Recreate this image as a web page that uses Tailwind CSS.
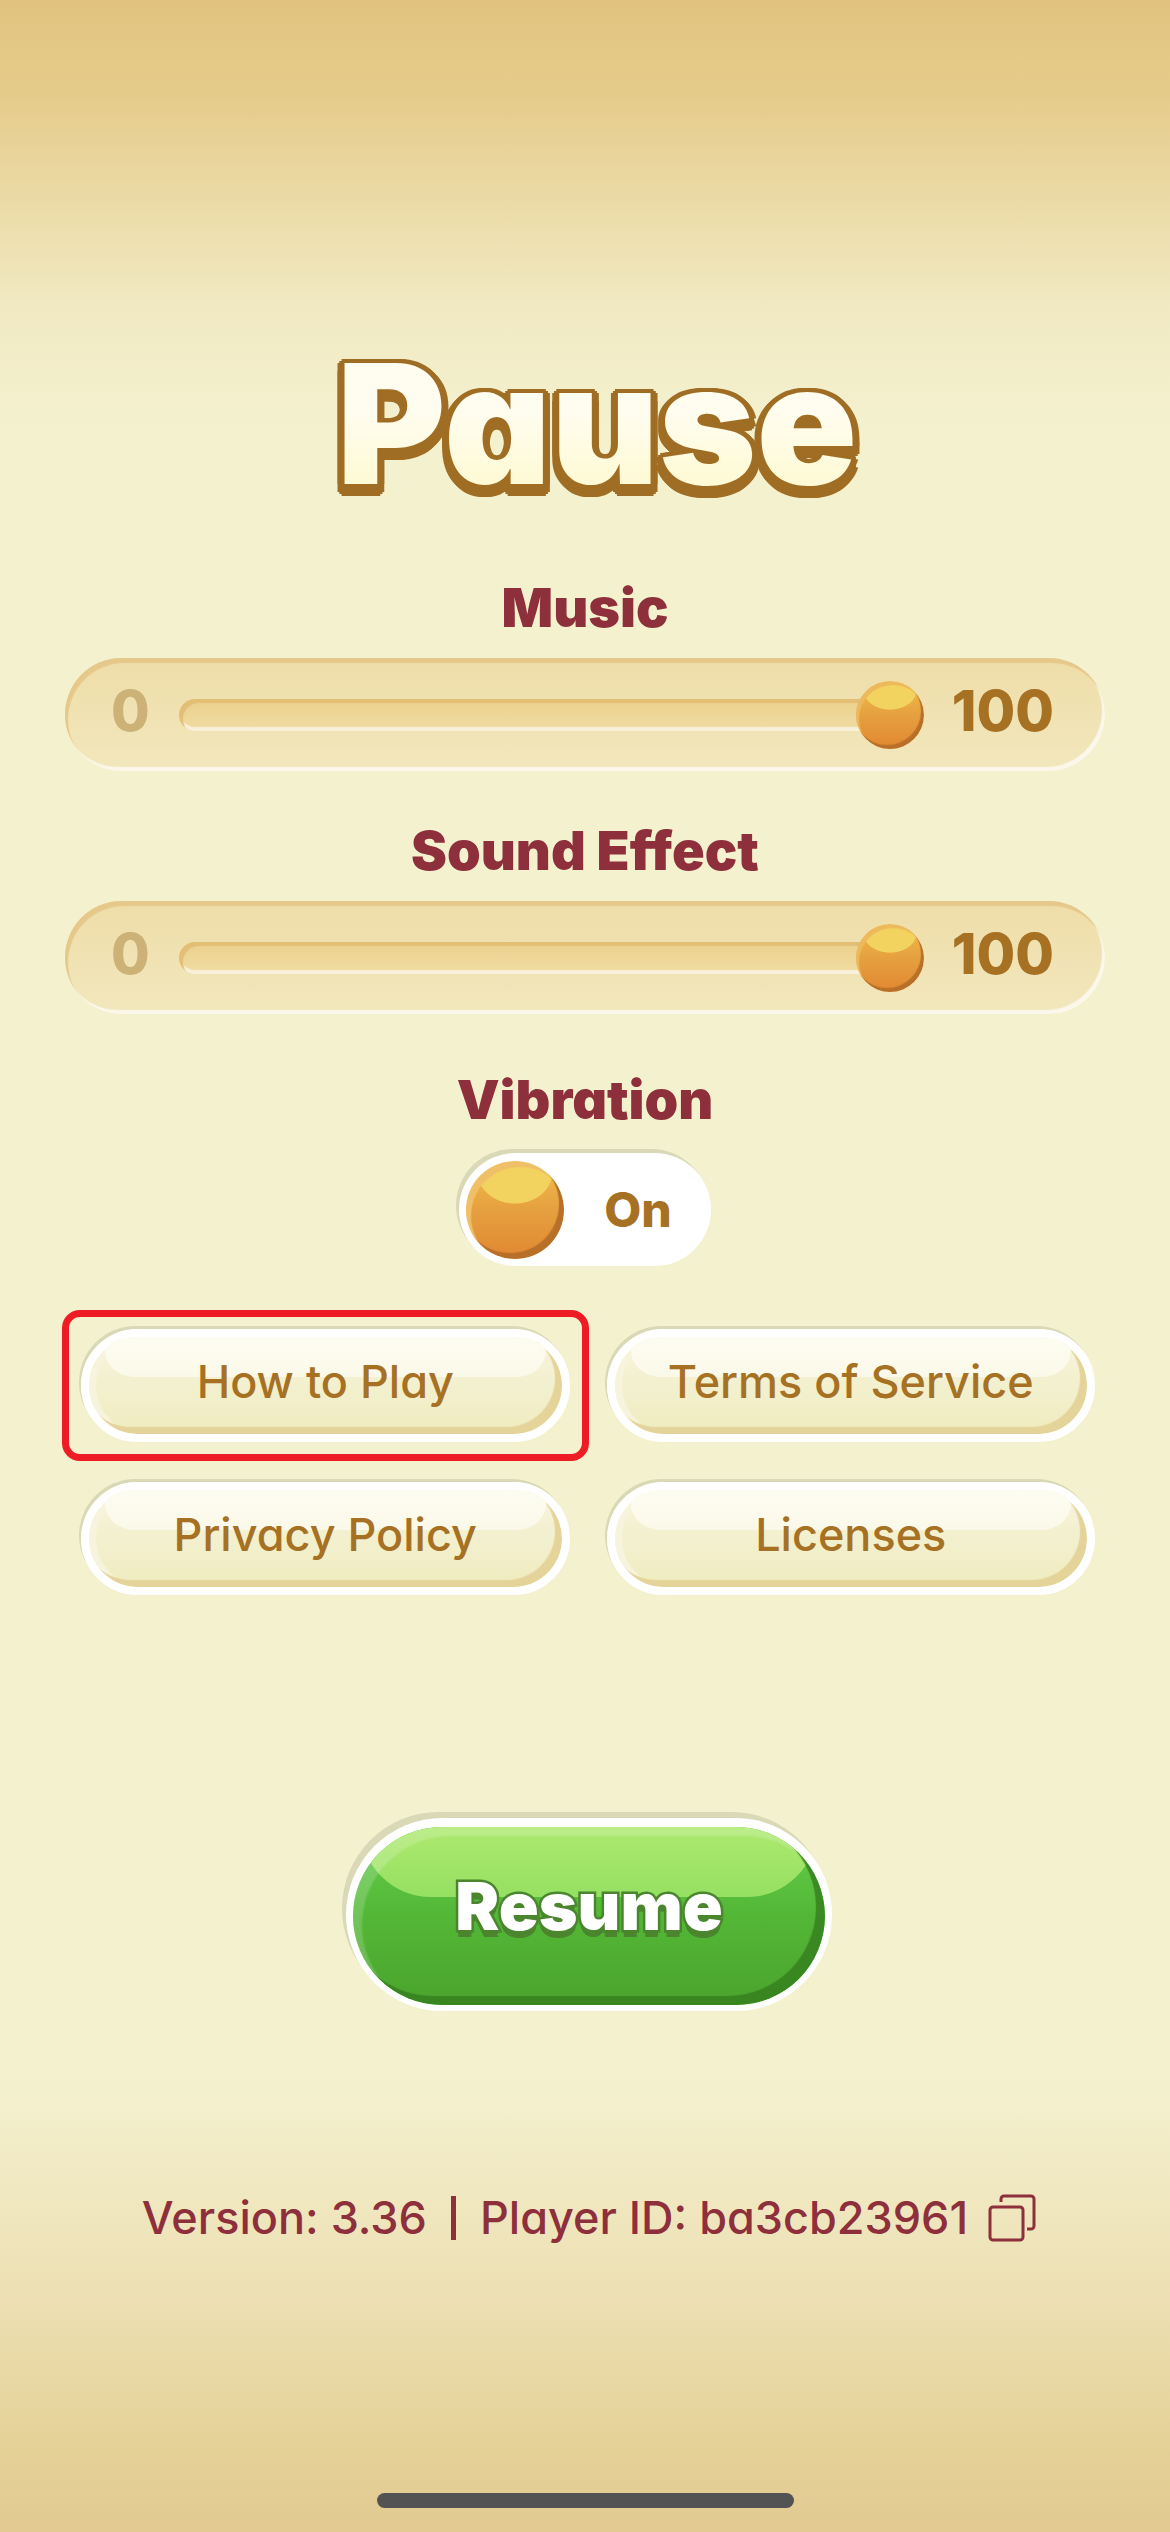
<!DOCTYPE html>
<html lang="en">

<head>
    <meta charset="UTF-8">
    <meta name="viewport" content="width=device-width, initial-scale=1.0">
    <title>Pause</title>
    <!-- Tailwind CSS -->
    <script src="https://cdn.jsdelivr.net/npm/@tailwindcss/browser@4"></script>
</head>

<body class="font-['Inter','Liberation_Sans',sans-serif] [font-feature-settings:'cv11'] text-[#8e2f3c]">
    <main
        class="min-h-screen w-full flex flex-col items-center pt-[344px] pb-6 bg-[linear-gradient(to_bottom,#e1c37e_0px,#e6cc8c_100px,#f1eac3_310px,#f4f1cf_430px,#f4f1cf_calc(100%-452px),#ede0b4_calc(100%-240px),#e4d196_calc(100%-80px),#e2ca92_100%)]">
        <h1 class="pl-6 text-[166px] leading-[160px] font-black">
            <span
                class="block bg-linear-to-b from-[#fffdf0] from-40% to-[#fefad6] to-85% bg-clip-text text-transparent [filter:drop-shadow(2px_2px_0_#9f6d23)_drop-shadow(-2px_-2px_0_#9f6d23)_drop-shadow(2px_-2px_0_#9f6d23)_drop-shadow(-2px_2px_0_#9f6d23)_drop-shadow(3px_0_0_#9f6d23)_drop-shadow(-3px_0_0_#9f6d23)_drop-shadow(0_8px_0_#9f6d23)]">Pause</span>
        </h1>

        <!-- Volume sliders -->
        <section class="w-full px-[65px] mt-[78px] flex flex-col items-center">
            <label for="music" class="text-[54px] leading-[52px] font-black">Music</label>
            <div
                class="mt-6 w-full h-[113px] rounded-full flex items-center pl-[46px] pr-[51px] bg-linear-to-b from-[#eedda8] to-[#f2e7bd] shadow-[inset_3px_5px_1px_#e6c88a,inset_-3px_-4px_1px_#fbf7ea]">
                <span class="w-[68px] pb-2 text-[56px] leading-[56px] font-extrabold text-[#cdb278]">0</span>
                <input id="music" type="range" min="0" max="100" value="100"
                    class="appearance-none min-w-0 flex-1 h-8 rounded-full bg-linear-to-b from-[#ecd08d] to-[#f0dca3] shadow-[inset_4px_4px_1px_#e3bf76,inset_0_-4px_1px_#f8f0da] [&::-webkit-slider-thumb]:appearance-none [&::-webkit-slider-thumb]:size-[68px] [&::-webkit-slider-thumb]:rounded-full [&::-webkit-slider-thumb]:bg-[radial-gradient(27px_20px_at_50%_9px,#f3d35f_96%,transparent),linear-gradient(#efc04e,#e6a03f_50%,#e18732)] [&::-webkit-slider-thumb]:shadow-[inset_-3px_-4px_1px_#b87029,inset_3px_4px_1px_#ecb95c]">
                <span class="pl-7 pb-2 text-[56px] leading-[56px] font-extrabold text-[#a77124]">100</span>
            </div>

            <label for="sound" class="mt-[54px] text-[54px] leading-[52px] font-black">Sound Effect</label>
            <div
                class="mt-6 w-full h-[113px] rounded-full flex items-center pl-[46px] pr-[51px] bg-linear-to-b from-[#eedda8] to-[#f2e7bd] shadow-[inset_3px_5px_1px_#e6c88a,inset_-3px_-4px_1px_#fbf7ea]">
                <span class="w-[68px] pb-2 text-[56px] leading-[56px] font-extrabold text-[#cdb278]">0</span>
                <input id="sound" type="range" min="0" max="100" value="100"
                    class="appearance-none min-w-0 flex-1 h-8 rounded-full bg-linear-to-b from-[#ecd08d] to-[#f0dca3] shadow-[inset_4px_4px_1px_#e3bf76,inset_0_-4px_1px_#f8f0da] [&::-webkit-slider-thumb]:appearance-none [&::-webkit-slider-thumb]:size-[68px] [&::-webkit-slider-thumb]:rounded-full [&::-webkit-slider-thumb]:bg-[radial-gradient(27px_20px_at_50%_9px,#f3d35f_96%,transparent),linear-gradient(#efc04e,#e6a03f_50%,#e18732)] [&::-webkit-slider-thumb]:shadow-[inset_-3px_-4px_1px_#b87029,inset_3px_4px_1px_#ecb95c]">
                <span class="pl-7 pb-2 text-[56px] leading-[56px] font-extrabold text-[#a77124]">100</span>
            </div>
        </section>

        <!-- Vibration toggle -->
        <section class="mt-[60px] flex flex-col items-center">
            <label for="vibration" class="text-[54px] leading-[52px] font-black">Vibration</label>
            <div
                class="mt-[27px] w-[252px] h-[113px] rounded-full bg-white flex items-center px-[7px] shadow-[-3px_-4px_0_#d9d8b7]">
                <input id="vibration" type="checkbox" role="switch" checked
                    class="appearance-none size-[98px] shrink-0 rounded-full bg-[radial-gradient(38px_32px_at_50%_11px,#f3d35f_97%,transparent),linear-gradient(#efc04e,#e6a03f_50%,#e18732)] shadow-[inset_-5px_-6px_1px_#b87029,inset_5px_6px_1px_#efc068]">
                <span class="flex-1 pl-2 text-center text-[48px] leading-[48px] font-extrabold text-[#a77124]">On</span>
            </div>
        </section>

        <!-- Links -->
        <section
            class="mt-[63px] w-full pl-[81px] pr-[75px] grid grid-cols-2 gap-x-[37px] gap-y-10 text-[45px] leading-[48px] font-medium text-[#a77124]">
            <div class="-m-[19px] p-3 border-[7px] border-[#ee1c24] rounded-[18px]">
                <button type="button"
                    class="relative w-full h-[113px] pb-2 rounded-full border-8 border-white bg-linear-to-b from-[#f7f4de] to-[#efecbf] bg-clip-padding shadow-[-2px_-3px_0_#d9d8b7,inset_-7px_-7px_1px_#e5d49a,inset_7px_0_1px_#f7f4dd]">
                    <span class="absolute inset-x-4 top-0 h-10 rounded-t-[32px_14px] rounded-b-[30px_26px] bg-linear-to-b from-[#fdfcf1] to-[#faf9e9]"></span>
                    <span class="relative">How to Play</span>
                </button>
            </div>
            <button type="button"
                class="relative w-full h-[113px] pb-2 rounded-full border-8 border-white bg-linear-to-b from-[#f7f4de] to-[#efecbf] bg-clip-padding shadow-[-2px_-3px_0_#d9d8b7,inset_-7px_-7px_1px_#e5d49a,inset_7px_0_1px_#f7f4dd]">
                <span class="absolute inset-x-4 top-0 h-10 rounded-t-[32px_14px] rounded-b-[30px_26px] bg-linear-to-b from-[#fdfcf1] to-[#faf9e9]"></span>
                <span class="relative">Terms of Service</span>
            </button>
            <button type="button"
                class="relative w-full h-[113px] pb-2 rounded-full border-8 border-white bg-linear-to-b from-[#f7f4de] to-[#efecbf] bg-clip-padding shadow-[-2px_-3px_0_#d9d8b7,inset_-7px_-7px_1px_#e5d49a,inset_7px_0_1px_#f7f4dd]">
                <span class="absolute inset-x-4 top-0 h-10 rounded-t-[32px_14px] rounded-b-[30px_26px] bg-linear-to-b from-[#fdfcf1] to-[#faf9e9]"></span>
                <span class="relative">Privacy Policy</span>
            </button>
            <button type="button"
                class="relative w-full h-[113px] pb-2 rounded-full border-8 border-white bg-linear-to-b from-[#f7f4de] to-[#efecbf] bg-clip-padding shadow-[-2px_-3px_0_#d9d8b7,inset_-7px_-7px_1px_#e5d49a,inset_7px_0_1px_#f7f4dd]">
                <span class="absolute inset-x-4 top-0 h-10 rounded-t-[32px_14px] rounded-b-[30px_26px] bg-linear-to-b from-[#fdfcf1] to-[#faf9e9]"></span>
                <span class="relative">Licenses</span>
            </button>
        </section>

        <button type="button"
            class="mt-[223px] ml-2 w-[486px] h-[193px] rounded-full bg-white px-[7px] pt-[9px] pb-[6px] shadow-[-4px_-6px_0_#d9d8b7]">
            <span
                class="relative flex h-full items-center justify-center overflow-hidden rounded-full bg-linear-to-b from-[#63d04c] via-[#53b736] to-[#4ba42e] pb-5">
                <span class="absolute inset-x-2 top-0 h-[70px] rounded-b-[70px] bg-linear-to-b from-[#ade96f] to-[#95e062]"></span>
                <span class="absolute inset-0 rounded-full shadow-[inset_-9px_-9px_1px_#37821fe0,inset_9px_9px_2px_#ffffff2e]"></span>
                <span
                    class="relative text-[66px] leading-[64px] font-black text-white [paint-order:stroke_fill] [-webkit-text-stroke:5px_#4b852e] [text-shadow:0_4px_0_#4b852e,0_7px_0_#4b852e]">Resume</span>
            </span>
        </button>

        <footer class="mt-[183px] ml-2 flex items-center text-[45px] leading-[48px] font-medium">
            <span>Version: 3.36</span>
            <span class="mx-6 w-[5px] h-11 bg-[#8e2f3c]"></span>
            <span>Player ID: ba3cb23961</span>
            <button type="button" aria-label="Copy player ID" class="ml-5">
                <svg class="size-12" viewBox="0 0 48 48" fill="none" stroke="currentColor" stroke-width="3">
                    <rect x="2" y="13" width="33" height="33" rx="3" />
                    <path d="M13 8V5a3 3 0 0 1 3-3h27a3 3 0 0 1 3 3v27a3 3 0 0 1-3 3h-4" />
                </svg>
            </button>
        </footer>

        <!-- Home indicator -->
        <div class="mt-auto w-[417px] h-[15px] rounded-full bg-[#535353]"></div>
    </main>
</body>

</html>
